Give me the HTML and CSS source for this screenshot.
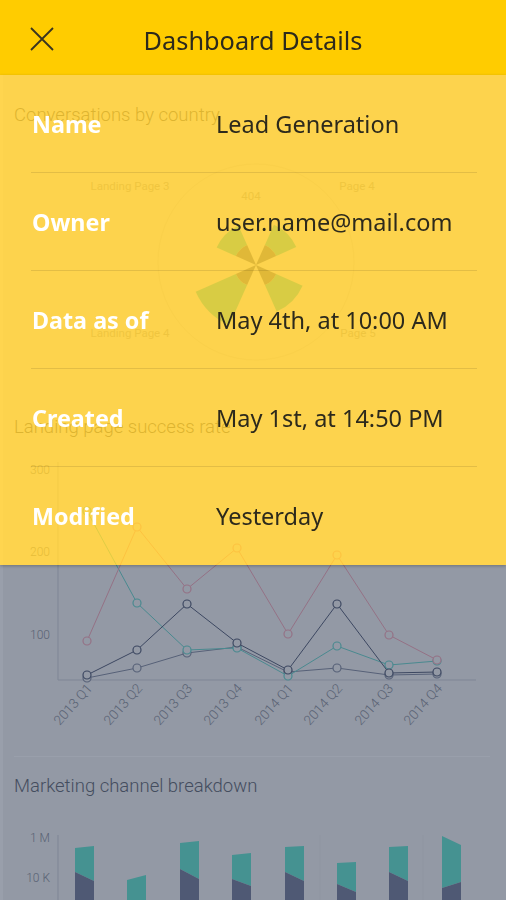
FILE: index.html
```html
<!DOCTYPE html>
<html lang="en">
<head>
<meta charset="utf-8">
<title>Dashboard Details</title>
<link rel="stylesheet" href="styles.css">
</head>
<body>
<main class="dashboard">
  <div class="appbar"></div>

  <section class="card card-polar">
    <h2 class="card-title">Conversations by country</h2>
    <svg class="chart" width="503" height="268" viewBox="3 127 503 268">
      <circle cx="256" cy="262" r="98" class="ring"/>
      <text x="130" y="190" class="plabel" text-anchor="middle">Landing Page 3</text>
      <text x="357" y="190" class="plabel" text-anchor="middle">Page 4</text>
      <text x="251" y="200" class="plabel" text-anchor="middle">404</text>
      <text x="130" y="337" class="plabel" text-anchor="middle">Landing Page 4</text>
      <text x="358" y="337" class="plabel" text-anchor="middle">Page 5</text>
      <!-- outer teal sectors -->
      <path class="w-teal" d="M235.9 256.1 L216.7 247.5 A43 43 0 0 1 238.5 225.7 L247.1 244.9 A22 22 0 0 0 235.9 256.1 Z"/>
      <path class="w-teal" d="M264.9 244.9 L273.9 224.8 A44 44 0 0 1 296.2 247.1 L276.1 256.1 A22 22 0 0 0 264.9 244.9 Z"/>
      <path class="w-teal" d="M276.1 273.9 L302.6 285.7 A51 51 0 0 1 276.7 311.6 L264.9 285.1 A22 22 0 0 0 276.1 273.9 Z"/>
      <path class="w-teal" d="M247.1 285.1 L229.2 325.3 A66 66 0 0 1 195.7 291.8 L235.9 273.9 A22 22 0 0 0 247.1 285.1 Z"/>
      <!-- inner navy sectors -->
      <path class="w-navy" d="M256 265 L235.9 256.1 A22 22 0 0 1 247.1 244.9 Z"/>
      <path class="w-navy" d="M256 265 L264.9 244.9 A22 22 0 0 1 276.1 256.1 Z"/>
      <path class="w-navy" d="M256 265 L276.1 273.9 A22 22 0 0 1 264.9 285.1 Z"/>
      <path class="w-navy" d="M256 265 L247.1 285.1 A22 22 0 0 1 235.9 273.9 Z"/>
    </svg>
  </section>

  <section class="card card-line">
    <h2 class="card-title">Landing page success rate</h2>
    <svg class="chart" width="503" height="317" viewBox="3 439 503 317">
      <line x1="58" y1="462" x2="58" y2="680" class="axis"/>
      <line x1="58" y1="680" x2="476" y2="680" class="axis"/>
      <text x="50" y="474" class="ylabel" text-anchor="end">300</text>
      <text x="50" y="556" class="ylabel" text-anchor="end">200</text>
      <text x="50" y="639" class="ylabel" text-anchor="end">100</text>

      <text class="xlabel" text-anchor="end" transform="rotate(-48 93 689)" x="93" y="689">2013 Q1</text>
      <text class="xlabel" text-anchor="end" transform="rotate(-48 143 689)" x="143" y="689">2013 Q2</text>
      <text class="xlabel" text-anchor="end" transform="rotate(-48 193 689)" x="193" y="689">2013 Q3</text>
      <text class="xlabel" text-anchor="end" transform="rotate(-48 243 689)" x="243" y="689">2013 Q4</text>
      <text class="xlabel" text-anchor="end" transform="rotate(-48 294 689)" x="294" y="689">2014 Q1</text>
      <text class="xlabel" text-anchor="end" transform="rotate(-48 343 689)" x="343" y="689">2014 Q2</text>
      <text class="xlabel" text-anchor="end" transform="rotate(-48 394 689)" x="394" y="689">2014 Q3</text>
      <text class="xlabel" text-anchor="end" transform="rotate(-48 443 689)" x="443" y="689">2014 Q4</text>

      <g class="series s-gray">
        <polyline points="87,678 137,668 187,653 237,647 288,672 337,668 389,675 437,674"/>
        <circle cx="87" cy="678" r="4"/><circle cx="137" cy="668" r="4"/><circle cx="187" cy="653" r="4"/><circle cx="237" cy="647" r="4"/>
        <circle cx="288" cy="672" r="4"/><circle cx="337" cy="668" r="4"/><circle cx="389" cy="675" r="4"/><circle cx="437" cy="674" r="4"/>
      </g>
      <g class="series s-teal">
        <polyline points="87,511 137,603 187,650 237,648 288,676 337,646 389,665 437,661"/>
        <circle cx="87" cy="511" r="4"/><circle cx="137" cy="603" r="4"/><circle cx="187" cy="650" r="4"/><circle cx="237" cy="648" r="4"/>
        <circle cx="288" cy="676" r="4"/><circle cx="337" cy="646" r="4"/><circle cx="389" cy="665" r="4"/><circle cx="437" cy="661" r="4"/>
      </g>
      <g class="series s-navy">
        <polyline points="87,675 137,650 187,604 237,643 288,670 337,604 389,673 437,672"/>
        <circle cx="87" cy="675" r="4"/><circle cx="137" cy="650" r="4"/><circle cx="187" cy="604" r="4"/><circle cx="237" cy="643" r="4"/>
        <circle cx="288" cy="670" r="4"/><circle cx="337" cy="604" r="4"/><circle cx="389" cy="673" r="4"/><circle cx="437" cy="672" r="4"/>
      </g>
      <g class="series s-red">
        <polyline points="87,641 137,527 187,589 237,548 288,634 337,555 389,635 437,660"/>
        <circle cx="87" cy="641" r="4"/><circle cx="137" cy="527" r="4"/><circle cx="187" cy="589" r="4"/><circle cx="237" cy="548" r="4"/>
        <circle cx="288" cy="634" r="4"/><circle cx="337" cy="555" r="4"/><circle cx="389" cy="635" r="4"/><circle cx="437" cy="660" r="4"/>
      </g>
    </svg>
  </section>

  <div class="divider"></div>

  <section class="card card-bar">
    <h2 class="card-title">Marketing channel breakdown</h2>
    <svg class="chart" width="503" height="110" viewBox="3 798 503 110">
      <line x1="58" y1="835" x2="58" y2="910" class="axis"/>
      <line x1="320" y1="835" x2="320" y2="910" class="grid"/>
      <line x1="423" y1="835" x2="423" y2="910" class="grid"/>
      <text x="50" y="842" class="ylabel" text-anchor="end">1 M</text>
      <text x="50" y="882" class="ylabel" text-anchor="end">10 K</text>

      <polygon class="b-teal" points="75,848 94,846 94,881 75,872"/>
      <polygon class="b-navy" points="75,872 94,881 94,910 75,910"/>
      <polygon class="b-teal" points="127,880 146,875 146,910 127,910"/>
      <polygon class="b-teal" points="180,843 199,841 199,879 180,869"/>
      <polygon class="b-navy" points="180,869 199,879 199,910 180,910"/>
      <polygon class="b-teal" points="232,855 251,853 251,886 232,879"/>
      <polygon class="b-navy" points="232,879 251,886 251,910 232,910"/>
      <polygon class="b-teal" points="285,847 304,846 304,881 285,872"/>
      <polygon class="b-navy" points="285,872 304,881 304,910 285,910"/>
      <polygon class="b-teal" points="337,863 356,862 356,892 337,884"/>
      <polygon class="b-navy" points="337,884 356,892 356,910 337,910"/>
      <polygon class="b-teal" points="389,847 408,846 408,881 389,872"/>
      <polygon class="b-navy" points="389,872 408,881 408,910 389,910"/>
      <polygon class="b-teal" points="442,836 461,845 461,882 442,888"/>
      <polygon class="b-navy" points="442,888 461,882 461,910 442,910"/>
    </svg>
  </section>
</main>

<div class="overlay">
  <header class="drawer-header">
    <button class="close" type="button" aria-label="Close">
      <svg width="24" height="24" viewBox="0 0 24 24">
        <path d="M1 1 L23 23 M23 1 L1 23" stroke="#3a3520" stroke-width="1.8" fill="none"/>
      </svg>
    </button>
    <h1 class="drawer-title">Dashboard Details</h1>
  </header>
  <dl class="details">
    <div class="detail-row"><dt>Name</dt><dd>Lead Generation</dd></div>
    <div class="detail-row"><dt>Owner</dt><dd>user.name@mail.com</dd></div>
    <div class="detail-row"><dt>Data as of</dt><dd>May 4th, at 10:00 AM</dd></div>
    <div class="detail-row"><dt>Created</dt><dd>May 1st, at 14:50 PM</dd></div>
    <div class="detail-row"><dt>Modified</dt><dd>Yesterday</dd></div>
  </dl>
  <div class="scrim"></div>
</div>
</body>
</html>
```
FILE: styles.css
```css
html, body {
  margin: 0;
  padding: 0;
}
body {
  width: 506px;
  height: 900px;
  overflow: hidden;
  background: #ffffff;
  font-family: Roboto, "Noto Sans", sans-serif;
}

/* ---------- underlying dashboard ---------- */
.dashboard {
  margin-left: 3px;
  background: #f2f2f2;
  min-height: 900px;
}
.appbar {
  height: 75px;
}
.card-title {
  margin: 0;
  padding-left: 11px;
  font-size: 18.5px;
  line-height: 24px;
  font-weight: 300;
  color: #555a66;
}
.card-polar { padding-top: 28px; }
.card-line { padding-top: 20px; }
.card-bar { padding-top: 17px; }
.divider {
  height: 1px;
  margin: 0 16px 0 11px;
  background: #ffffff;
}
.chart {
  display: block;
}
.ring {
  fill: none;
  stroke: #e3e3e3;
  stroke-width: 1;
}
.plabel {
  font-family: Roboto, sans-serif;
  font-size: 11.5px;
  fill: #b0b0b0;
}
.w-teal { fill: #3fd2c6; }
.w-navy { fill: #66708c; }
.axis {
  stroke: #c9ccd3;
  stroke-width: 1;
}
.grid {
  stroke: #ebebeb;
  stroke-width: 1;
}
.ylabel, .xlabel {
  font-family: Roboto, sans-serif;
  font-size: 12px;
  font-weight: 300;
  fill: #7f8590;
}
.xlabel { font-size: 13.5px; }
.series polyline {
  fill: none;
  stroke-width: 1;
}
.series circle {
  fill: #f2f2f2;
  stroke-width: 1.2;
}
.s-red polyline, .s-red circle { stroke: #f5a3b3; }
.s-teal polyline, .s-teal circle { stroke: #5fd3c7; }
.s-navy polyline, .s-navy circle { stroke: #454f6a; }
.s-gray polyline, .s-gray circle { stroke: #7a8298; }
.b-teal { fill: #56e4cb; }
.b-navy { fill: #6a7290; }

/* ---------- details drawer ---------- */
.overlay {
  position: fixed;
  inset: 0;
  display: flex;
  flex-direction: column;
  font-family: "Noto Sans", "Open Sans", sans-serif;
}
.drawer-header {
  height: 75px;
  flex: none;
  background: #ffcc00;
  display: grid;
  grid-template-columns: 1fr auto 1fr;
  align-items: center;
}
.close {
  justify-self: start;
  margin: 2px 0 0 30px;
  padding: 0;
  width: 24px;
  height: 24px;
  border: 0;
  background: none;
  display: block;
}
.close svg { display: block; }
.drawer-title {
  margin: 0;
  padding-top: 5px;
  font-size: 25.3px;
  font-weight: 400;
  color: #2d2a1c;
  white-space: nowrap;
}
.details {
  margin: 0;
  flex: none;
  background: rgba(255, 203, 35, 0.8);
  box-shadow: 0 1px 3px rgba(0, 0, 0, 0.25);
  position: relative;
}
.detail-row {
  display: flex;
  align-items: center;
  height: 98px;
  box-sizing: border-box;
  margin: 0 29px 0 31px;
  border-bottom: 1px solid rgba(0, 0, 0, 0.1);
}
.detail-row:last-child {
  border-bottom: 0;
}
.detail-row dt {
  width: 184px;
  padding-left: 1px;
  font-size: 23.3px;
  font-weight: 700;
  color: #ffffff;
}
.detail-row dd {
  margin: 0;
  font-size: 23.5px;
  color: #2d2a1c;
  white-space: nowrap;
}
.scrim {
  flex: 1;
  background: rgba(51, 63, 87, 0.5);
}
```
